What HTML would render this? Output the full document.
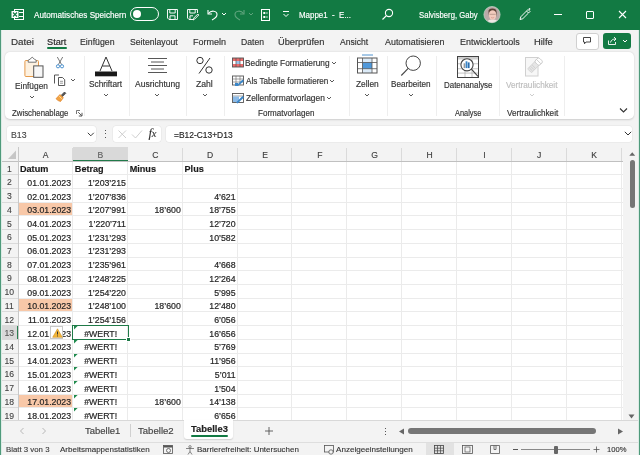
<!DOCTYPE html>
<html><head><meta charset="utf-8"><style>
html,body{margin:0;padding:0;}
body{width:640px;height:455px;overflow:hidden;position:relative;font-family:"Liberation Sans", sans-serif;background:#f3f3f3;}
.t{position:absolute;white-space:nowrap;-webkit-text-stroke:0.16px currentColor;}
.r{position:absolute;box-sizing:content-box;}
.s{position:absolute;overflow:visible;}
</style></head><body>
<div style="position:absolute;left:0;top:0;width:640px;height:455px;filter:blur(0.3px)">
<div class="r" style="left:0px;top:0px;width:640px;height:30px;background:#127a43;"></div>
<svg class="s" style="left:11px;top:8px;" width="13" height="13" viewBox="0 0 13 13"><rect x="3.5" y="1.5" width="9" height="10" fill="none" stroke="#fff" stroke-width="1"/><line x1="8" y1="4.5" x2="12.5" y2="4.5" stroke="#fff"/><line x1="8" y1="8.5" x2="12.5" y2="8.5" stroke="#fff"/><rect x="0.5" y="3" width="7" height="7" fill="#fff"/><path d="M2 4.5 L6 8.5 M6 4.5 L2 8.5" stroke="#127a43" stroke-width="1.1"/></svg>
<div class="t" style="top:10.72px;font-size:8.6px;line-height:8.6px;color:#fff;font-weight:400;left:33.6px;transform:scaleX(0.947);transform-origin:0 0;">Automatisches Speichern</div>
<div class="r" style="left:130px;top:7px;width:27px;height:12px;border:1px solid #fff;border-radius:7px;"></div>
<div class="r" style="left:133px;top:10px;width:8px;height:8px;background:#fff;border-radius:50%;"></div>
<svg class="s" style="left:166px;top:8px;" width="13" height="13" viewBox="0 0 13 13"><path d="M1.5 1.5 H11.5 V11.5 H3 L1.5 10 Z" fill="none" stroke="#fff" stroke-width="0.95"/><path d="M3.8 1.5 V5 H9.2 V1.5" fill="none" stroke="#fff" stroke-width="0.95"/><path d="M4 11.5 V7.8 H9 V11.5" fill="none" stroke="#fff" stroke-width="0.95"/></svg>
<svg class="s" style="left:186px;top:8px;" width="13" height="13" viewBox="0 0 13 13"><path d="M7 11.5 H3 L1.5 10 V1.5 H11.5 V5" fill="none" stroke="#fff" stroke-width="0.95"/><path d="M3.8 1.5 V5 H9.2 V1.5" fill="none" stroke="#fff" stroke-width="0.95"/><path d="M4 11.5 V7.8 H7" fill="none" stroke="#fff" stroke-width="0.95"/><path d="M7.3 12 L7.8 10 L11.8 6 L12.8 7 L8.8 11 Z" fill="none" stroke="#fff" stroke-width="0.9"/></svg>
<svg class="s" style="left:206px;top:8px;" width="13" height="13" viewBox="0 0 13 13"><path d="M2 2 V6 H6" fill="none" stroke="#fff" stroke-width="1.1"/><path d="M2.5 5.5 C5 2 11 2.5 11 6.5 C11 9 9 10.5 6 12" fill="none" stroke="#fff" stroke-width="1.1"/></svg>
<svg class="s" style="left:221px;top:12px;" width="6" height="4" viewBox="0 0 6 4"><path d="M1 1 L3 3 L5 1" fill="none" stroke="#fff"/></svg>
<svg class="s" style="left:233px;top:8px;" width="13" height="13" viewBox="0 0 13 13"><path d="M11 2 V6 H7" fill="none" stroke="#5fa47d" stroke-width="1.1"/><path d="M10.5 5.5 C8 2 2 2.5 2 6.5 C2 9 4 10.5 7 12" fill="none" stroke="#5fa47d" stroke-width="1.1"/></svg>
<svg class="s" style="left:248px;top:12px;" width="6" height="4" viewBox="0 0 6 4"><path d="M1 1 L3 3 L5 1" fill="none" stroke="#5fa47d"/></svg>
<svg class="s" style="left:260px;top:8px;" width="11" height="13" viewBox="0 0 11 13"><rect x="1.5" y="1.5" width="8" height="11" fill="none" stroke="#fff" stroke-width="1"/><rect x="3.3" y="4" width="2" height="2" fill="#fff"/><rect x="3.3" y="8" width="2" height="2" fill="#fff"/><line x1="6" y1="5" x2="7.8" y2="5" stroke="#fff" stroke-width="0.8"/><line x1="6" y1="9" x2="7.8" y2="9" stroke="#fff" stroke-width="0.8"/></svg>
<svg class="s" style="left:282px;top:10px;" width="8" height="9" viewBox="0 0 8 9"><line x1="1" y1="1.5" x2="7" y2="1.5" stroke="#fff"/><path d="M1.5 4 L4 6.5 L6.5 4" fill="none" stroke="#fff"/></svg>
<div class="t" style="top:10.52px;font-size:8.6px;line-height:8.6px;color:#fff;font-weight:400;left:299.17px;transform:scaleX(0.923);transform-origin:0 0;">Mappe1&nbsp; - &nbsp;E...</div>
<svg class="s" style="left:381px;top:8px;" width="13" height="13" viewBox="0 0 13 13"><circle cx="8" cy="5" r="3.6" fill="none" stroke="#fff" stroke-width="1.1"/><line x1="5.4" y1="7.6" x2="1.5" y2="11.5" stroke="#fff" stroke-width="1.2"/></svg>
<div class="t" style="top:10.72px;font-size:8.6px;line-height:8.6px;color:#fff;font-weight:400;left:419.4px;transform:scaleX(0.895);transform-origin:0 0;">Salvisberg, Gaby</div>
<svg class="s" style="left:483px;top:6px;" width="18" height="18" viewBox="0 0 18 18"><defs><clipPath id="av"><circle cx="9" cy="8.6" r="8.1"/></clipPath></defs><g clip-path="url(#av)"><rect width="18" height="18" fill="#b9aaa8"/><path d="M3.5 18 Q4 13 9.5 13.5 Q15 13 15.5 18 Z" fill="#eee8e4"/><path d="M5.5 6 Q5 2.3 9.5 2.4 Q13.8 2.5 13.6 6.5 L13.4 11 L12.5 6 Q9.5 4 6.5 6 L6 10 Z" fill="#5b4236"/><ellipse cx="9.6" cy="9" rx="3.7" ry="4.8" fill="#f2cbbd"/><path d="M6.5 8.3 H12.7" stroke="#9a7e74" stroke-width="0.6"/><path d="M8 11.5 Q9.6 12.4 11.2 11.5" fill="none" stroke="#d08a80" stroke-width="0.6"/></g><circle cx="9" cy="8.6" r="8.1" fill="none" stroke="#c8d8cc" stroke-width="0.7"/></svg>
<svg class="s" style="left:518px;top:7px;" width="14" height="14" viewBox="0 0 14 14"><path d="M2 12.5 L2.8 9.8 L8.5 4 L10.5 6 L4.8 11.7 Z" fill="none" stroke="#fff" stroke-width="0.95"/><path d="M8.5 4 L10 2.5 L12 4.5 L10.5 6" fill="none" stroke="#fff" stroke-width="0.95"/><path d="M11.5 1 V3 M10.5 2 H12.5" stroke="#fff" stroke-width="0.7"/></svg>
<div class="r" style="left:554px;top:13.5px;width:8px;height:1.2px;background:#fff;"></div>
<div class="r" style="left:586px;top:11px;width:6px;height:6px;border:1.2px solid #fff;border-radius:1px;"></div>
<svg class="s" style="left:618px;top:10px;" width="9" height="9" viewBox="0 0 9 9"><path d="M1 1 L8 8 M8 1 L1 8" stroke="#fff" stroke-width="1.1"/></svg>
<div class="r" style="left:0px;top:30px;width:640px;height:425px;background:#f3f3f3;"></div>
<div class="t" style="top:37.57px;font-size:8.9px;line-height:8.9px;color:#333;font-weight:400;left:10.71px;transform:scaleX(1.106);transform-origin:0 0;">Datei</div>
<div class="t" style="top:37.57px;font-size:8.9px;line-height:8.9px;color:#1f1f1f;font-weight:400;left:46.58px;transform:scaleX(1.036);transform-origin:0 0;">Start</div>
<div class="t" style="top:37.57px;font-size:8.9px;line-height:8.9px;color:#333;font-weight:400;left:79.9px;transform:scaleX(0.986);transform-origin:0 0;">Einfügen</div>
<div class="t" style="top:37.57px;font-size:8.9px;line-height:8.9px;color:#333;font-weight:400;left:130.21px;transform:scaleX(0.977);transform-origin:0 0;">Seitenlayout</div>
<div class="t" style="top:37.57px;font-size:8.9px;line-height:8.9px;color:#333;font-weight:400;left:193.03px;transform:scaleX(1.015);transform-origin:0 0;">Formeln</div>
<div class="t" style="top:37.57px;font-size:8.9px;line-height:8.9px;color:#333;font-weight:400;left:241.21px;transform:scaleX(0.972);transform-origin:0 0;">Daten</div>
<div class="t" style="top:37.57px;font-size:8.9px;line-height:8.9px;color:#333;font-weight:400;left:278.05px;transform:scaleX(1.045);transform-origin:0 0;">Überprüfen</div>
<div class="t" style="top:37.57px;font-size:8.9px;line-height:8.9px;color:#333;font-weight:400;left:339.7px;transform:scaleX(0.966);transform-origin:0 0;">Ansicht</div>
<div class="t" style="top:37.57px;font-size:8.9px;line-height:8.9px;color:#333;font-weight:400;left:384.75px;transform:scaleX(1.003);transform-origin:0 0;">Automatisieren</div>
<div class="t" style="top:37.57px;font-size:8.9px;line-height:8.9px;color:#333;font-weight:400;left:459.58px;transform:scaleX(1.011);transform-origin:0 0;">Entwicklertools</div>
<div class="t" style="top:37.57px;font-size:8.9px;line-height:8.9px;color:#333;font-weight:400;left:533.75px;transform:scaleX(1.058);transform-origin:0 0;">Hilfe</div>
<div class="r" style="left:47px;top:47px;width:19.5px;height:1.8px;background:#127a43;border-radius:1px;"></div>
<div class="r" style="left:576px;top:33px;width:20.5px;height:15px;background:#fff;border:1px solid #d0d0d0;border-radius:3px;"></div>
<svg class="s" style="left:582px;top:36px;" width="10" height="9" viewBox="0 0 10 9"><path d="M1.5 1.5 H8.5 V6 H4 L2.5 7.8 V6 H1.5 Z" fill="none" stroke="#333" stroke-width="0.9"/></svg>
<div class="r" style="left:603px;top:33px;width:28px;height:16px;background:#127a43;border-radius:3px;"></div>
<svg class="s" style="left:607px;top:36px;" width="11" height="10" viewBox="0 0 11 10"><path d="M1.5 4.5 V8.5 H8.5 V6" fill="none" stroke="#fff" stroke-width="0.9"/><path d="M3.5 6.5 C4 4 6 3 8.5 3 M7 1 L9 3 L7 5" fill="none" stroke="#fff" stroke-width="0.9"/></svg>
<svg class="s" style="left:622px;top:39px;" width="6" height="4" viewBox="0 0 6 4"><path d="M1 1 L3 3 L5 1" fill="none" stroke="#fff"/></svg>
<div class="r" style="left:5px;top:52px;width:629px;height:67px;background:#fff;border-radius:5px;box-shadow:0 0.5px 2px rgba(0,0,0,0.16);"></div>
<div class="r" style="left:84px;top:56px;width:1px;height:60px;background:#eeeeee;"></div>
<div class="r" style="left:129px;top:56px;width:1px;height:60px;background:#eeeeee;"></div>
<div class="r" style="left:185.5px;top:56px;width:1px;height:60px;background:#eeeeee;"></div>
<div class="r" style="left:224px;top:56px;width:1px;height:60px;background:#eeeeee;"></div>
<div class="r" style="left:348.5px;top:56px;width:1px;height:60px;background:#eeeeee;"></div>
<div class="r" style="left:386.5px;top:56px;width:1px;height:60px;background:#eeeeee;"></div>
<div class="r" style="left:436px;top:56px;width:1px;height:60px;background:#eeeeee;"></div>
<div class="r" style="left:499px;top:56px;width:1px;height:60px;background:#eeeeee;"></div>
<div class="r" style="left:564px;top:56px;width:1px;height:60px;background:#eeeeee;"></div>
<svg class="s" style="left:23px;top:56px;" width="22" height="23" viewBox="0 0 22 23"><rect x="1.9" y="4.5" width="13.6" height="16" rx="1" fill="#fdf1e0" stroke="#e59a4a" stroke-width="1"/><path d="M5.2 6.2 V4.2 L7 3.2 L9.2 1.2 L11.4 3.2 L13.2 4.2 V6.2 Z" fill="#fff" stroke="#666" stroke-width="0.9" stroke-linejoin="round"/><rect x="10.7" y="9.9" width="9.3" height="11.4" fill="#f7f7f7" stroke="#555" stroke-width="1"/></svg>
<div class="t" style="top:81.69px;font-size:8.4px;line-height:8.4px;color:#333;font-weight:400;left:15.13px;transform:scaleX(0.995);transform-origin:0 0;">Einfügen</div>
<svg class="s" style="left:29px;top:94.5px;" width="6" height="4" viewBox="0 0 6 4"><path d="M1 1 L3 3 L5 1" fill="none" stroke="#444" stroke-width="0.9"/></svg>
<svg class="s" style="left:55px;top:56px;" width="10" height="13" viewBox="0 0 10 13"><path d="M2.3 1 L6.6 8.6 M7.7 1 L3.4 8.6" stroke="#555" stroke-width="0.8"/><circle cx="3" cy="10.3" r="1.6" fill="none" stroke="#3a86c8" stroke-width="0.9"/><circle cx="7" cy="10.3" r="1.6" fill="none" stroke="#3a86c8" stroke-width="0.9"/></svg>
<svg class="s" style="left:53px;top:73px;" width="13" height="14" viewBox="0 0 13 14"><path d="M1.5 10.5 V2 H6" fill="none" stroke="#444" stroke-width="0.9"/><path d="M5.5 4.5 H9.5 L11.7 6.7 V12.5 H5.5 Z" fill="#fff" stroke="#444" stroke-width="0.9"/><line x1="7" y1="8.3" x2="10" y2="8.3" stroke="#555" stroke-width="0.6"/><line x1="7" y1="10.2" x2="10" y2="10.2" stroke="#555" stroke-width="0.6"/></svg>
<svg class="s" style="left:69.5px;top:78px;" width="6" height="4" viewBox="0 0 6 4"><path d="M1 1 L3 3 L5 1" fill="none" stroke="#444" stroke-width="0.9"/></svg>
<svg class="s" style="left:54px;top:90px;" width="13" height="13" viewBox="0 0 13 13"><path d="M7 5.5 L10.5 2 L11.8 3.3 L8.3 6.8" fill="#555" stroke="#444" stroke-width="0.8"/><path d="M6 4.5 L9.3 7.8 L6.5 11.5 Q4 11 2 8.7 Z" fill="#f2a444" stroke="#dd7d22" stroke-width="0.7"/><path d="M5.2 6.2 L7.8 8.8" stroke="#fde2a8" stroke-width="0.9"/></svg>
<div class="t" style="top:109.56px;font-size:8.2px;line-height:8.2px;color:#333;font-weight:400;left:12.27px;transform:scaleX(0.954);transform-origin:0 0;">Zwischenablage</div>
<svg class="s" style="left:76px;top:110px;" width="7" height="7" viewBox="0 0 7 7"><path d="M0.5 4 V0.5 H4" fill="none" stroke="#555" stroke-width="0.8"/><path d="M2.2 2.2 L5.6 5.6 M6 2.8 V6 H2.8" fill="none" stroke="#444" stroke-width="0.9"/></svg>
<svg class="s" style="left:94px;top:55px;" width="24" height="22" viewBox="0 0 24 22"><path d="M6 16 L12 2 L18 16 M8.3 11 H15.7" fill="none" stroke="#333" stroke-width="1"/><rect x="1" y="16.5" width="22" height="4.8" fill="#1a1a1a"/></svg>
<div class="t" style="top:79.89px;font-size:8.4px;line-height:8.4px;color:#333;font-weight:400;left:89.33px;transform:scaleX(0.986);transform-origin:0 0;">Schriftart</div>
<svg class="s" style="left:103px;top:93px;" width="6" height="4" viewBox="0 0 6 4"><path d="M1 1 L3 3 L5 1" fill="none" stroke="#444" stroke-width="0.9"/></svg>
<svg class="s" style="left:146px;top:55px;" width="24" height="20" viewBox="0 0 24 20"><line x1="2" y1="3.5" x2="21" y2="3.5" stroke="#444" stroke-width="0.9"/><line x1="5" y1="7" x2="18" y2="7" stroke="#444" stroke-width="0.9"/><line x1="2" y1="10.5" x2="21" y2="10.5" stroke="#444" stroke-width="0.9"/><line x1="5" y1="14" x2="18" y2="14" stroke="#444" stroke-width="0.9"/><line x1="2" y1="17.5" x2="21" y2="17.5" stroke="#444" stroke-width="0.9"/></svg>
<div class="t" style="top:79.89px;font-size:8.4px;line-height:8.4px;color:#333;font-weight:400;left:134.7px;transform:scaleX(1.019);transform-origin:0 0;">Ausrichtung</div>
<svg class="s" style="left:154px;top:93px;" width="6" height="4" viewBox="0 0 6 4"><path d="M1 1 L3 3 L5 1" fill="none" stroke="#444" stroke-width="0.9"/></svg>
<svg class="s" style="left:195px;top:56px;" width="20" height="19" viewBox="0 0 20 19"><circle cx="5" cy="4.5" r="3.2" fill="none" stroke="#333" stroke-width="1"/><circle cx="14" cy="14" r="3.2" fill="none" stroke="#333" stroke-width="1"/><line x1="15" y1="2" x2="4" y2="17.5" stroke="#333" stroke-width="1"/></svg>
<div class="t" style="top:79.89px;font-size:8.4px;line-height:8.4px;color:#333;font-weight:400;left:196.04px;transform:scaleX(1.030);transform-origin:0 0;">Zahl</div>
<svg class="s" style="left:201.5px;top:93px;" width="6" height="4" viewBox="0 0 6 4"><path d="M1 1 L3 3 L5 1" fill="none" stroke="#444" stroke-width="0.9"/></svg>
<svg class="s" style="left:231px;top:57px;" width="14" height="11" viewBox="0 0 14 11"><rect x="1.5" y="1" width="11" height="9" fill="#fff"/><rect x="1.5" y="1" width="11" height="3" fill="#ec6b6b"/><rect x="1.5" y="7" width="11" height="3" fill="#ec6b6b"/><rect x="5" y="4" width="4" height="3" fill="#9cc3ea"/><rect x="1.5" y="1" width="11" height="9" fill="none" stroke="#555" stroke-width="0.9"/><line x1="5" y1="1" x2="5" y2="10" stroke="#555" stroke-width="0.7"/><line x1="9" y1="1" x2="9" y2="10" stroke="#555" stroke-width="0.7"/></svg>
<div class="t" style="top:60.06px;font-size:8.2px;line-height:8.2px;color:#333;font-weight:400;left:245.33px;transform:scaleX(1.015);transform-origin:0 0;">Bedingte Formatierung</div>
<svg class="s" style="left:331px;top:61px;" width="6" height="4" viewBox="0 0 6 4"><path d="M1 1 L3 3 L5 1" fill="none" stroke="#444" stroke-width="0.9"/></svg>
<svg class="s" style="left:231px;top:75px;" width="14" height="11" viewBox="0 0 14 11"><rect x="1.5" y="1" width="11" height="9" fill="none" stroke="#555" stroke-width="0.9"/><line x1="1.5" y1="4" x2="12.5" y2="4" stroke="#666" stroke-width="0.6"/><line x1="1.5" y1="7" x2="12.5" y2="7" stroke="#666" stroke-width="0.6"/><line x1="5" y1="1" x2="5" y2="10" stroke="#666" stroke-width="0.6"/><line x1="9" y1="1" x2="9" y2="10" stroke="#666" stroke-width="0.6"/><path d="M5.5 10.5 L11.5 4.5 L13 6 L7 11 Z" fill="#3a86c8"/><rect x="4" y="8" width="3" height="3" fill="#3a86c8"/></svg>
<div class="t" style="top:77.66px;font-size:8.2px;line-height:8.2px;color:#333;font-weight:400;left:246.0px;transform:scaleX(0.991);transform-origin:0 0;">Als Tabelle formatieren</div>
<svg class="s" style="left:329px;top:79px;" width="6" height="4" viewBox="0 0 6 4"><path d="M1 1 L3 3 L5 1" fill="none" stroke="#444" stroke-width="0.9"/></svg>
<svg class="s" style="left:231px;top:92px;" width="14" height="12" viewBox="0 0 14 12"><rect x="1.5" y="1.5" width="11" height="9" fill="none" stroke="#555" stroke-width="0.9"/><line x1="1.5" y1="4" x2="12.5" y2="4" stroke="#666" stroke-width="0.6"/><rect x="2" y="4.5" width="6" height="5.5" fill="#8cbbe8"/><path d="M5 10.5 L11.5 4 L13 5.5 L6.5 11.5 Z" fill="#3a86c8"/></svg>
<div class="t" style="top:94.86px;font-size:8.2px;line-height:8.2px;color:#333;font-weight:400;left:245.75px;transform:scaleX(1.025);transform-origin:0 0;">Zellenformatvorlagen</div>
<svg class="s" style="left:325.5px;top:96px;" width="6" height="4" viewBox="0 0 6 4"><path d="M1 1 L3 3 L5 1" fill="none" stroke="#444" stroke-width="0.9"/></svg>
<div class="t" style="top:109.56px;font-size:8.2px;line-height:8.2px;color:#333;font-weight:400;left:257.96px;transform:scaleX(0.983);transform-origin:0 0;">Formatvorlagen</div>
<svg class="s" style="left:356px;top:53px;" width="22" height="21" viewBox="0 0 22 21"><line x1="6" y1="2" x2="17" y2="2" stroke="#3a86c8" stroke-width="0.9"/><rect x="6.5" y="5" width="9.5" height="15" fill="#dcebf8"/><rect x="6.5" y="9.5" width="9.5" height="6.2" fill="#4f98da"/><rect x="1.5" y="5" width="19.5" height="15" fill="none" stroke="#555" stroke-width="1"/><line x1="1.5" y1="9.5" x2="21" y2="9.5" stroke="#555" stroke-width="0.8"/><line x1="1.5" y1="15.7" x2="21" y2="15.7" stroke="#555" stroke-width="0.8"/><line x1="6.5" y1="5" x2="6.5" y2="20" stroke="#555" stroke-width="0.8"/><line x1="16" y1="5" x2="16" y2="20" stroke="#555" stroke-width="0.8"/></svg>
<div class="t" style="top:79.89px;font-size:8.4px;line-height:8.4px;color:#333;font-weight:400;left:355.65px;transform:scaleX(0.998);transform-origin:0 0;">Zellen</div>
<svg class="s" style="left:364px;top:93px;" width="6" height="4" viewBox="0 0 6 4"><path d="M1 1 L3 3 L5 1" fill="none" stroke="#444" stroke-width="0.9"/></svg>
<svg class="s" style="left:399px;top:54px;" width="24" height="23" viewBox="0 0 24 23"><circle cx="14.2" cy="9.2" r="7.2" fill="none" stroke="#444" stroke-width="1"/><line x1="9.2" y1="14.4" x2="2.3" y2="21.5" stroke="#444" stroke-width="1.1"/></svg>
<div class="t" style="top:79.89px;font-size:8.4px;line-height:8.4px;color:#333;font-weight:400;left:391.04px;transform:scaleX(0.976);transform-origin:0 0;">Bearbeiten</div>
<svg class="s" style="left:407.5px;top:93px;" width="6" height="4" viewBox="0 0 6 4"><path d="M1 1 L3 3 L5 1" fill="none" stroke="#444" stroke-width="0.9"/></svg>
<svg class="s" style="left:456px;top:55px;" width="24" height="24" viewBox="0 0 24 24"><rect x="1.5" y="1.5" width="21" height="21" fill="#fff" stroke="#444" stroke-width="1"/><rect x="2" y="2" width="20" height="2.5" fill="#cfcfcf"/><line x1="2" y1="8.75" x2="22" y2="8.75" stroke="#aaa" stroke-width="0.7"/><line x1="2" y1="13.75" x2="22" y2="13.75" stroke="#aaa" stroke-width="0.7"/><line x1="2" y1="18.1" x2="22" y2="18.1" stroke="#aaa" stroke-width="0.7"/><line x1="9" y1="4.5" x2="9" y2="22" stroke="#aaa" stroke-width="0.7"/><line x1="16" y1="4.5" x2="16" y2="22" stroke="#aaa" stroke-width="0.7"/><circle cx="11" cy="9.8" r="6.1" fill="#fff" stroke="#444" stroke-width="1.1"/><line x1="15.4" y1="14.2" x2="22" y2="21.3" stroke="#444" stroke-width="1.1"/><rect x="7.6" y="8.3" width="1.6" height="4.8" fill="#9a9a9a"/><rect x="9.6" y="6.3" width="1.8" height="6.8" fill="#3a86c8"/><rect x="11.8" y="7.4" width="1.8" height="5.7" fill="#2a6fb0"/></svg>
<div class="t" style="top:81.29px;font-size:8.4px;line-height:8.4px;color:#333;font-weight:400;left:443.66px;transform:scaleX(0.947);transform-origin:0 0;">Datenanalyse</div>
<div class="t" style="top:109.56px;font-size:8.2px;line-height:8.2px;color:#333;font-weight:400;left:455.0px;transform:scaleX(0.902);transform-origin:0 0;">Analyse</div>
<svg class="s" style="left:523px;top:55px;" width="22" height="23" viewBox="0 0 22 23"><rect x="2.5" y="2.5" width="12.5" height="18.5" fill="#f7f7f7" stroke="#d0d0d0" stroke-width="1"/><g transform="rotate(-45 12 10)"><rect x="4" y="7.5" width="15" height="5.5" rx="1" fill="#e6e6e6" stroke="#cfcfcf" stroke-width="0.8"/><line x1="6" y1="8" x2="6" y2="12.5" stroke="#c8c8c8" stroke-width="0.7"/><line x1="8" y1="8" x2="8" y2="12.5" stroke="#c8c8c8" stroke-width="0.7"/><line x1="10" y1="8" x2="10" y2="12.5" stroke="#c8c8c8" stroke-width="0.7"/><rect x="14" y="7" width="6" height="6.5" rx="2" fill="#fff" stroke="#c8c8c8" stroke-width="0.9"/><line x1="17" y1="7" x2="17" y2="13.5" stroke="#c8c8c8" stroke-width="0.8"/></g></svg>
<div class="t" style="top:81.29px;font-size:8.4px;line-height:8.4px;color:#bdbdbd;font-weight:400;left:505.86px;transform:scaleX(0.978);transform-origin:0 0;">Vertraulichkeit</div>
<svg class="s" style="left:528.5px;top:93px;" width="6" height="4" viewBox="0 0 6 4"><path d="M1 1 L3 3 L5 1" fill="none" stroke="#c8c8c8" stroke-width="0.9"/></svg>
<div class="t" style="top:109.56px;font-size:8.2px;line-height:8.2px;color:#333;font-weight:400;left:506.76px;transform:scaleX(0.996);transform-origin:0 0;">Vertraulichkeit</div>
<svg class="s" style="left:619px;top:107px;" width="9" height="7" viewBox="0 0 9 7"><path d="M1 1.5 L4.5 5 L8 1.5" fill="none" stroke="#333" stroke-width="1.1"/></svg>
<div class="r" style="left:7px;top:126px;width:89px;height:15.5px;background:#fff;border-radius:3px;box-shadow:0 0 0 0.5px #e3e3e3;"></div>
<div class="t" style="top:130.52px;font-size:8.6px;line-height:8.6px;color:#444;font-weight:400;left:10.55px;-webkit-text-stroke:0.12px currentColor;transform:scaleX(1.019);transform-origin:0 0;">B13</div>
<svg class="s" style="left:86.5px;top:132.3px;" width="8" height="5" viewBox="0 0 8 5"><path d="M0.8 0.8 L3.8 3.8 L6.8 0.8" fill="none" stroke="#333" stroke-width="0.95"/></svg>
<div class="r" style="left:104.5px;top:129.5px;width:1.3px;height:1.3px;background:#555;"></div>
<div class="r" style="left:104.5px;top:133px;width:1.3px;height:1.3px;background:#555;"></div>
<div class="r" style="left:104.5px;top:136.5px;width:1.3px;height:1.3px;background:#555;"></div>
<div class="r" style="left:113px;top:126px;width:48px;height:15.5px;background:#fff;border-radius:3px;box-shadow:0 0 0 0.5px #e3e3e3;"></div>
<svg class="s" style="left:117px;top:129px;" width="11" height="10" viewBox="0 0 11 10"><path d="M1.5 1.5 L9 9 M9 1.5 L1.5 9" stroke="#c8c8c8" stroke-width="0.9"/></svg>
<svg class="s" style="left:131px;top:129px;" width="12" height="10" viewBox="0 0 12 10"><path d="M1 5.5 L4.5 9 L11 1.5" fill="none" stroke="#c8c8c8" stroke-width="0.9"/></svg>
<div class="t" style="left:148.5px;top:125.5px;font-family:'Liberation Serif',serif;font-style:italic;font-size:13px;line-height:14px;color:#333;-webkit-text-stroke:0.1px #333">f<span style="font-size:10.5px;position:relative;left:-0.3px;top:0.3px">x</span></div>
<div class="r" style="left:166px;top:126px;width:466px;height:15.5px;background:#fff;border-radius:3px;box-shadow:0 0 0 0.5px #e3e3e3;"></div>
<div class="t" style="top:130.62px;font-size:8.6px;line-height:8.6px;color:#262626;font-weight:400;left:173.58px;transform:scaleX(0.981);transform-origin:0 0;">=B12-C13+D13</div>
<svg class="s" style="left:623.5px;top:130.5px;" width="8" height="5" viewBox="0 0 8 5"><path d="M0.8 0.8 L4 4 L7.2 0.8" fill="none" stroke="#333" stroke-width="1"/></svg>
<div style="position:absolute;left:0;top:0;width:640px;height:420px;overflow:hidden">
<div class="r" style="left:0px;top:147px;width:623px;height:14px;background:#f3f3f3;"></div>
<div class="r" style="left:18px;top:161px;width:605px;height:259px;background:#fff;"></div>
<div class="r" style="left:0px;top:161px;width:18px;height:259px;background:#f3f3f3;"></div>
<svg class="s" style="left:7px;top:149px;" width="10" height="11" viewBox="0 0 10 11"><path d="M9 1.5 L9 10 L1 10 Z" fill="#c6c6c6"/></svg>
<div class="r" style="left:73px;top:147px;width:54.5px;height:14px;background:#d9d9d9;"></div>
<div class="r" style="left:2px;top:326px;width:16px;height:13px;background:#d9d9d9;"></div>
<div class="r" style="left:18px;top:203px;width:54px;height:12px;background:#f8c8a8;"></div>
<div class="r" style="left:18px;top:299px;width:54px;height:12px;background:#f8c8a8;"></div>
<div class="r" style="left:18px;top:395px;width:54px;height:12px;background:#f8c8a8;"></div>
<div class="r" style="left:18px;top:174px;width:605px;height:1px;background:#ebebeb;"></div>
<div class="r" style="left:18px;top:188px;width:605px;height:1px;background:#ebebeb;"></div>
<div class="r" style="left:18px;top:202px;width:605px;height:1px;background:#ebebeb;"></div>
<div class="r" style="left:18px;top:215px;width:605px;height:1px;background:#ebebeb;"></div>
<div class="r" style="left:18px;top:229px;width:605px;height:1px;background:#ebebeb;"></div>
<div class="r" style="left:18px;top:243px;width:605px;height:1px;background:#ebebeb;"></div>
<div class="r" style="left:18px;top:257px;width:605px;height:1px;background:#ebebeb;"></div>
<div class="r" style="left:18px;top:270px;width:605px;height:1px;background:#ebebeb;"></div>
<div class="r" style="left:18px;top:284px;width:605px;height:1px;background:#ebebeb;"></div>
<div class="r" style="left:18px;top:298px;width:605px;height:1px;background:#ebebeb;"></div>
<div class="r" style="left:18px;top:311px;width:605px;height:1px;background:#ebebeb;"></div>
<div class="r" style="left:18px;top:325px;width:605px;height:1px;background:#ebebeb;"></div>
<div class="r" style="left:18px;top:339px;width:605px;height:1px;background:#ebebeb;"></div>
<div class="r" style="left:18px;top:353px;width:605px;height:1px;background:#ebebeb;"></div>
<div class="r" style="left:18px;top:366px;width:605px;height:1px;background:#ebebeb;"></div>
<div class="r" style="left:18px;top:380px;width:605px;height:1px;background:#ebebeb;"></div>
<div class="r" style="left:18px;top:394px;width:605px;height:1px;background:#ebebeb;"></div>
<div class="r" style="left:18px;top:407px;width:605px;height:1px;background:#ebebeb;"></div>
<div class="r" style="left:18px;top:421px;width:605px;height:1px;background:#ebebeb;"></div>
<div class="r" style="left:18px;top:435px;width:605px;height:1px;background:#ebebeb;"></div>
<div class="r" style="left:72px;top:161px;width:1px;height:259px;background:#ebebeb;"></div>
<div class="r" style="left:127px;top:161px;width:1px;height:259px;background:#ebebeb;"></div>
<div class="r" style="left:182px;top:161px;width:1px;height:259px;background:#ebebeb;"></div>
<div class="r" style="left:237px;top:161px;width:1px;height:259px;background:#ebebeb;"></div>
<div class="r" style="left:291px;top:161px;width:1px;height:259px;background:#ebebeb;"></div>
<div class="r" style="left:346px;top:161px;width:1px;height:259px;background:#ebebeb;"></div>
<div class="r" style="left:401px;top:161px;width:1px;height:259px;background:#ebebeb;"></div>
<div class="r" style="left:456px;top:161px;width:1px;height:259px;background:#ebebeb;"></div>
<div class="r" style="left:511px;top:161px;width:1px;height:259px;background:#ebebeb;"></div>
<div class="r" style="left:566px;top:161px;width:1px;height:259px;background:#ebebeb;"></div>
<div class="r" style="left:621px;top:161px;width:1px;height:259px;background:#ebebeb;"></div>
<div class="r" style="left:72px;top:148px;width:1px;height:13px;background:#dadada;"></div>
<div class="r" style="left:127px;top:148px;width:1px;height:13px;background:#dadada;"></div>
<div class="r" style="left:182px;top:148px;width:1px;height:13px;background:#dadada;"></div>
<div class="r" style="left:237px;top:148px;width:1px;height:13px;background:#dadada;"></div>
<div class="r" style="left:291px;top:148px;width:1px;height:13px;background:#dadada;"></div>
<div class="r" style="left:346px;top:148px;width:1px;height:13px;background:#dadada;"></div>
<div class="r" style="left:401px;top:148px;width:1px;height:13px;background:#dadada;"></div>
<div class="r" style="left:456px;top:148px;width:1px;height:13px;background:#dadada;"></div>
<div class="r" style="left:511px;top:148px;width:1px;height:13px;background:#dadada;"></div>
<div class="r" style="left:566px;top:148px;width:1px;height:13px;background:#dadada;"></div>
<div class="r" style="left:621px;top:148px;width:1px;height:13px;background:#dadada;"></div>
<div class="r" style="left:0px;top:174px;width:18px;height:1px;background:#dadada;"></div>
<div class="r" style="left:0px;top:188px;width:18px;height:1px;background:#dadada;"></div>
<div class="r" style="left:0px;top:202px;width:18px;height:1px;background:#dadada;"></div>
<div class="r" style="left:0px;top:215px;width:18px;height:1px;background:#dadada;"></div>
<div class="r" style="left:0px;top:229px;width:18px;height:1px;background:#dadada;"></div>
<div class="r" style="left:0px;top:243px;width:18px;height:1px;background:#dadada;"></div>
<div class="r" style="left:0px;top:257px;width:18px;height:1px;background:#dadada;"></div>
<div class="r" style="left:0px;top:270px;width:18px;height:1px;background:#dadada;"></div>
<div class="r" style="left:0px;top:284px;width:18px;height:1px;background:#dadada;"></div>
<div class="r" style="left:0px;top:298px;width:18px;height:1px;background:#dadada;"></div>
<div class="r" style="left:0px;top:311px;width:18px;height:1px;background:#dadada;"></div>
<div class="r" style="left:0px;top:325px;width:18px;height:1px;background:#dadada;"></div>
<div class="r" style="left:0px;top:339px;width:18px;height:1px;background:#dadada;"></div>
<div class="r" style="left:0px;top:353px;width:18px;height:1px;background:#dadada;"></div>
<div class="r" style="left:0px;top:366px;width:18px;height:1px;background:#dadada;"></div>
<div class="r" style="left:0px;top:380px;width:18px;height:1px;background:#dadada;"></div>
<div class="r" style="left:0px;top:394px;width:18px;height:1px;background:#dadada;"></div>
<div class="r" style="left:0px;top:407px;width:18px;height:1px;background:#dadada;"></div>
<div class="r" style="left:0px;top:421px;width:18px;height:1px;background:#dadada;"></div>
<div class="r" style="left:0px;top:435px;width:18px;height:1px;background:#dadada;"></div>
<div class="r" style="left:0px;top:160.5px;width:623px;height:1px;background:#c0c0c0;"></div>
<div class="r" style="left:17.5px;top:147px;width:1px;height:273px;background:#c8c8c8;"></div>
<div class="r" style="left:72.5px;top:159.8px;width:55.3px;height:1.5px;background:#217a4a;"></div>
<div class="r" style="left:17px;top:326px;width:1.3px;height:13px;background:#2a7d50;"></div>
<div class="t" style="top:150.92px;font-size:8.6px;line-height:8.6px;color:#3c3c3c;font-weight:400;left:-104.4px;width:300px;text-align:center;-webkit-text-stroke:0.12px currentColor;">A</div>
<div class="t" style="top:150.92px;font-size:8.6px;line-height:8.6px;color:#606060;font-weight:400;left:-49.55000000000001px;width:300px;text-align:center;-webkit-text-stroke:0.12px currentColor;">B</div>
<div class="t" style="top:150.92px;font-size:8.6px;line-height:8.6px;color:#3c3c3c;font-weight:400;left:5.300000000000011px;width:300px;text-align:center;-webkit-text-stroke:0.12px currentColor;">C</div>
<div class="t" style="top:150.92px;font-size:8.6px;line-height:8.6px;color:#3c3c3c;font-weight:400;left:60.150000000000006px;width:300px;text-align:center;-webkit-text-stroke:0.12px currentColor;">D</div>
<div class="t" style="top:150.92px;font-size:8.6px;line-height:8.6px;color:#3c3c3c;font-weight:400;left:115.0px;width:300px;text-align:center;-webkit-text-stroke:0.12px currentColor;">E</div>
<div class="t" style="top:150.92px;font-size:8.6px;line-height:8.6px;color:#3c3c3c;font-weight:400;left:169.85000000000002px;width:300px;text-align:center;-webkit-text-stroke:0.12px currentColor;">F</div>
<div class="t" style="top:150.92px;font-size:8.6px;line-height:8.6px;color:#3c3c3c;font-weight:400;left:224.70000000000005px;width:300px;text-align:center;-webkit-text-stroke:0.12px currentColor;">G</div>
<div class="t" style="top:150.92px;font-size:8.6px;line-height:8.6px;color:#3c3c3c;font-weight:400;left:279.55px;width:300px;text-align:center;-webkit-text-stroke:0.12px currentColor;">H</div>
<div class="t" style="top:150.92px;font-size:8.6px;line-height:8.6px;color:#3c3c3c;font-weight:400;left:334.40000000000003px;width:300px;text-align:center;-webkit-text-stroke:0.12px currentColor;">I</div>
<div class="t" style="top:150.92px;font-size:8.6px;line-height:8.6px;color:#3c3c3c;font-weight:400;left:389.25px;width:300px;text-align:center;-webkit-text-stroke:0.12px currentColor;">J</div>
<div class="t" style="top:150.92px;font-size:8.6px;line-height:8.6px;color:#3c3c3c;font-weight:400;left:444.1px;width:300px;text-align:center;-webkit-text-stroke:0.12px currentColor;">K</div>
<div class="t" style="top:164.64px;font-size:8.6px;line-height:8.6px;color:#404040;font-weight:400;left:-140.7px;width:300px;text-align:center;-webkit-text-stroke:0.1px currentColor;">1</div>
<div class="t" style="top:178.36px;font-size:8.6px;line-height:8.6px;color:#404040;font-weight:400;left:-140.7px;width:300px;text-align:center;-webkit-text-stroke:0.1px currentColor;">2</div>
<div class="t" style="top:192.08px;font-size:8.6px;line-height:8.6px;color:#404040;font-weight:400;left:-140.7px;width:300px;text-align:center;-webkit-text-stroke:0.1px currentColor;">3</div>
<div class="t" style="top:205.80px;font-size:8.6px;line-height:8.6px;color:#404040;font-weight:400;left:-140.7px;width:300px;text-align:center;-webkit-text-stroke:0.1px currentColor;">4</div>
<div class="t" style="top:219.52px;font-size:8.6px;line-height:8.6px;color:#404040;font-weight:400;left:-140.7px;width:300px;text-align:center;-webkit-text-stroke:0.1px currentColor;">5</div>
<div class="t" style="top:233.24px;font-size:8.6px;line-height:8.6px;color:#404040;font-weight:400;left:-140.7px;width:300px;text-align:center;-webkit-text-stroke:0.1px currentColor;">6</div>
<div class="t" style="top:246.96px;font-size:8.6px;line-height:8.6px;color:#404040;font-weight:400;left:-140.7px;width:300px;text-align:center;-webkit-text-stroke:0.1px currentColor;">7</div>
<div class="t" style="top:260.68px;font-size:8.6px;line-height:8.6px;color:#404040;font-weight:400;left:-140.7px;width:300px;text-align:center;-webkit-text-stroke:0.1px currentColor;">8</div>
<div class="t" style="top:274.40px;font-size:8.6px;line-height:8.6px;color:#404040;font-weight:400;left:-140.7px;width:300px;text-align:center;-webkit-text-stroke:0.1px currentColor;">9</div>
<div class="t" style="top:288.12px;font-size:8.6px;line-height:8.6px;color:#404040;font-weight:400;left:-140.7px;width:300px;text-align:center;-webkit-text-stroke:0.1px currentColor;">10</div>
<div class="t" style="top:301.84px;font-size:8.6px;line-height:8.6px;color:#404040;font-weight:400;left:-140.7px;width:300px;text-align:center;-webkit-text-stroke:0.1px currentColor;">11</div>
<div class="t" style="top:315.56px;font-size:8.6px;line-height:8.6px;color:#404040;font-weight:400;left:-140.7px;width:300px;text-align:center;-webkit-text-stroke:0.1px currentColor;">12</div>
<div class="t" style="top:329.28px;font-size:8.6px;line-height:8.6px;color:#555;font-weight:400;left:-140.7px;width:300px;text-align:center;-webkit-text-stroke:0.1px currentColor;">13</div>
<div class="t" style="top:343.00px;font-size:8.6px;line-height:8.6px;color:#404040;font-weight:400;left:-140.7px;width:300px;text-align:center;-webkit-text-stroke:0.1px currentColor;">14</div>
<div class="t" style="top:356.72px;font-size:8.6px;line-height:8.6px;color:#404040;font-weight:400;left:-140.7px;width:300px;text-align:center;-webkit-text-stroke:0.1px currentColor;">15</div>
<div class="t" style="top:370.44px;font-size:8.6px;line-height:8.6px;color:#404040;font-weight:400;left:-140.7px;width:300px;text-align:center;-webkit-text-stroke:0.1px currentColor;">16</div>
<div class="t" style="top:384.16px;font-size:8.6px;line-height:8.6px;color:#404040;font-weight:400;left:-140.7px;width:300px;text-align:center;-webkit-text-stroke:0.1px currentColor;">17</div>
<div class="t" style="top:397.88px;font-size:8.6px;line-height:8.6px;color:#404040;font-weight:400;left:-140.7px;width:300px;text-align:center;-webkit-text-stroke:0.1px currentColor;">18</div>
<div class="t" style="top:411.60px;font-size:8.6px;line-height:8.6px;color:#404040;font-weight:400;left:-140.7px;width:300px;text-align:center;-webkit-text-stroke:0.1px currentColor;">19</div>
<div class="t" style="top:164.82px;font-size:9.1px;line-height:9.1px;color:#1a1a1a;font-weight:700;left:20.0px;">Datum</div>
<div class="t" style="top:164.82px;font-size:9.1px;line-height:9.1px;color:#1a1a1a;font-weight:700;left:74.85px;">Betrag</div>
<div class="t" style="top:164.82px;font-size:9.1px;line-height:9.1px;color:#1a1a1a;font-weight:700;left:129.7px;">Minus</div>
<div class="t" style="top:164.82px;font-size:9.1px;line-height:9.1px;color:#1a1a1a;font-weight:700;left:184.55px;">Plus</div>
<div class="t" style="top:178.83px;font-size:8.75px;line-height:8.75px;color:#262626;font-weight:400;right:568.95px;-webkit-text-stroke:0.2px currentColor;">01.01.2023</div>
<div class="t" style="top:178.83px;font-size:8.75px;line-height:8.75px;color:#262626;font-weight:400;right:514.1px;-webkit-text-stroke:0.2px currentColor;">1’203’215</div>
<div class="t" style="top:192.55px;font-size:8.75px;line-height:8.75px;color:#262626;font-weight:400;right:568.95px;-webkit-text-stroke:0.2px currentColor;">02.01.2023</div>
<div class="t" style="top:192.55px;font-size:8.75px;line-height:8.75px;color:#262626;font-weight:400;right:514.1px;-webkit-text-stroke:0.2px currentColor;">1’207’836</div>
<div class="t" style="top:192.55px;font-size:8.75px;line-height:8.75px;color:#262626;font-weight:400;right:404.4px;-webkit-text-stroke:0.2px currentColor;">4’621</div>
<div class="t" style="top:206.27px;font-size:8.75px;line-height:8.75px;color:#262626;font-weight:400;right:568.95px;-webkit-text-stroke:0.2px currentColor;">03.01.2023</div>
<div class="t" style="top:206.27px;font-size:8.75px;line-height:8.75px;color:#262626;font-weight:400;right:514.1px;-webkit-text-stroke:0.2px currentColor;">1’207’991</div>
<div class="t" style="top:206.27px;font-size:8.75px;line-height:8.75px;color:#262626;font-weight:400;right:459.25px;-webkit-text-stroke:0.2px currentColor;">18’600</div>
<div class="t" style="top:206.27px;font-size:8.75px;line-height:8.75px;color:#262626;font-weight:400;right:404.4px;-webkit-text-stroke:0.2px currentColor;">18’755</div>
<div class="t" style="top:219.99px;font-size:8.75px;line-height:8.75px;color:#262626;font-weight:400;right:568.95px;-webkit-text-stroke:0.2px currentColor;">04.01.2023</div>
<div class="t" style="top:219.99px;font-size:8.75px;line-height:8.75px;color:#262626;font-weight:400;right:514.1px;-webkit-text-stroke:0.2px currentColor;">1’220’711</div>
<div class="t" style="top:219.99px;font-size:8.75px;line-height:8.75px;color:#262626;font-weight:400;right:404.4px;-webkit-text-stroke:0.2px currentColor;">12’720</div>
<div class="t" style="top:233.71px;font-size:8.75px;line-height:8.75px;color:#262626;font-weight:400;right:568.95px;-webkit-text-stroke:0.2px currentColor;">05.01.2023</div>
<div class="t" style="top:233.71px;font-size:8.75px;line-height:8.75px;color:#262626;font-weight:400;right:514.1px;-webkit-text-stroke:0.2px currentColor;">1’231’293</div>
<div class="t" style="top:233.71px;font-size:8.75px;line-height:8.75px;color:#262626;font-weight:400;right:404.4px;-webkit-text-stroke:0.2px currentColor;">10’582</div>
<div class="t" style="top:247.43px;font-size:8.75px;line-height:8.75px;color:#262626;font-weight:400;right:568.95px;-webkit-text-stroke:0.2px currentColor;">06.01.2023</div>
<div class="t" style="top:247.43px;font-size:8.75px;line-height:8.75px;color:#262626;font-weight:400;right:514.1px;-webkit-text-stroke:0.2px currentColor;">1’231’293</div>
<div class="t" style="top:261.15px;font-size:8.75px;line-height:8.75px;color:#262626;font-weight:400;right:568.95px;-webkit-text-stroke:0.2px currentColor;">07.01.2023</div>
<div class="t" style="top:261.15px;font-size:8.75px;line-height:8.75px;color:#262626;font-weight:400;right:514.1px;-webkit-text-stroke:0.2px currentColor;">1’235’961</div>
<div class="t" style="top:261.15px;font-size:8.75px;line-height:8.75px;color:#262626;font-weight:400;right:404.4px;-webkit-text-stroke:0.2px currentColor;">4’668</div>
<div class="t" style="top:274.87px;font-size:8.75px;line-height:8.75px;color:#262626;font-weight:400;right:568.95px;-webkit-text-stroke:0.2px currentColor;">08.01.2023</div>
<div class="t" style="top:274.87px;font-size:8.75px;line-height:8.75px;color:#262626;font-weight:400;right:514.1px;-webkit-text-stroke:0.2px currentColor;">1’248’225</div>
<div class="t" style="top:274.87px;font-size:8.75px;line-height:8.75px;color:#262626;font-weight:400;right:404.4px;-webkit-text-stroke:0.2px currentColor;">12’264</div>
<div class="t" style="top:288.59px;font-size:8.75px;line-height:8.75px;color:#262626;font-weight:400;right:568.95px;-webkit-text-stroke:0.2px currentColor;">09.01.2023</div>
<div class="t" style="top:288.59px;font-size:8.75px;line-height:8.75px;color:#262626;font-weight:400;right:514.1px;-webkit-text-stroke:0.2px currentColor;">1’254’220</div>
<div class="t" style="top:288.59px;font-size:8.75px;line-height:8.75px;color:#262626;font-weight:400;right:404.4px;-webkit-text-stroke:0.2px currentColor;">5’995</div>
<div class="t" style="top:302.31px;font-size:8.75px;line-height:8.75px;color:#262626;font-weight:400;right:568.95px;-webkit-text-stroke:0.2px currentColor;">10.01.2023</div>
<div class="t" style="top:302.31px;font-size:8.75px;line-height:8.75px;color:#262626;font-weight:400;right:514.1px;-webkit-text-stroke:0.2px currentColor;">1’248’100</div>
<div class="t" style="top:302.31px;font-size:8.75px;line-height:8.75px;color:#262626;font-weight:400;right:459.25px;-webkit-text-stroke:0.2px currentColor;">18’600</div>
<div class="t" style="top:302.31px;font-size:8.75px;line-height:8.75px;color:#262626;font-weight:400;right:404.4px;-webkit-text-stroke:0.2px currentColor;">12’480</div>
<div class="t" style="top:316.03px;font-size:8.75px;line-height:8.75px;color:#262626;font-weight:400;right:568.95px;-webkit-text-stroke:0.2px currentColor;">11.01.2023</div>
<div class="t" style="top:316.03px;font-size:8.75px;line-height:8.75px;color:#262626;font-weight:400;right:514.1px;-webkit-text-stroke:0.2px currentColor;">1’254’156</div>
<div class="t" style="top:316.03px;font-size:8.75px;line-height:8.75px;color:#262626;font-weight:400;right:404.4px;-webkit-text-stroke:0.2px currentColor;">6’056</div>
<div class="t" style="top:329.75px;font-size:8.75px;line-height:8.75px;color:#262626;font-weight:400;right:568.95px;-webkit-text-stroke:0.2px currentColor;">12.01.2023</div>
<div class="t" style="top:329.75px;font-size:8.75px;line-height:8.75px;color:#262626;font-weight:400;left:-49.35000000000001px;width:300px;text-align:center;-webkit-text-stroke:0.2px currentColor;">#WERT!</div>
<div class="t" style="top:329.75px;font-size:8.75px;line-height:8.75px;color:#262626;font-weight:400;right:404.4px;-webkit-text-stroke:0.2px currentColor;">16’656</div>
<div class="t" style="top:343.47px;font-size:8.75px;line-height:8.75px;color:#262626;font-weight:400;right:568.95px;-webkit-text-stroke:0.2px currentColor;">13.01.2023</div>
<div class="t" style="top:343.47px;font-size:8.75px;line-height:8.75px;color:#262626;font-weight:400;left:-49.35000000000001px;width:300px;text-align:center;-webkit-text-stroke:0.2px currentColor;">#WERT!</div>
<div class="t" style="top:343.47px;font-size:8.75px;line-height:8.75px;color:#262626;font-weight:400;right:404.4px;-webkit-text-stroke:0.2px currentColor;">5’769</div>
<div class="t" style="top:357.19px;font-size:8.75px;line-height:8.75px;color:#262626;font-weight:400;right:568.95px;-webkit-text-stroke:0.2px currentColor;">14.01.2023</div>
<div class="t" style="top:357.19px;font-size:8.75px;line-height:8.75px;color:#262626;font-weight:400;left:-49.35000000000001px;width:300px;text-align:center;-webkit-text-stroke:0.2px currentColor;">#WERT!</div>
<div class="t" style="top:357.19px;font-size:8.75px;line-height:8.75px;color:#262626;font-weight:400;right:404.4px;-webkit-text-stroke:0.2px currentColor;">11’956</div>
<div class="t" style="top:370.91px;font-size:8.75px;line-height:8.75px;color:#262626;font-weight:400;right:568.95px;-webkit-text-stroke:0.2px currentColor;">15.01.2023</div>
<div class="t" style="top:370.91px;font-size:8.75px;line-height:8.75px;color:#262626;font-weight:400;left:-49.35000000000001px;width:300px;text-align:center;-webkit-text-stroke:0.2px currentColor;">#WERT!</div>
<div class="t" style="top:370.91px;font-size:8.75px;line-height:8.75px;color:#262626;font-weight:400;right:404.4px;-webkit-text-stroke:0.2px currentColor;">5’011</div>
<div class="t" style="top:384.63px;font-size:8.75px;line-height:8.75px;color:#262626;font-weight:400;right:568.95px;-webkit-text-stroke:0.2px currentColor;">16.01.2023</div>
<div class="t" style="top:384.63px;font-size:8.75px;line-height:8.75px;color:#262626;font-weight:400;left:-49.35000000000001px;width:300px;text-align:center;-webkit-text-stroke:0.2px currentColor;">#WERT!</div>
<div class="t" style="top:384.63px;font-size:8.75px;line-height:8.75px;color:#262626;font-weight:400;right:404.4px;-webkit-text-stroke:0.2px currentColor;">1’504</div>
<div class="t" style="top:398.35px;font-size:8.75px;line-height:8.75px;color:#262626;font-weight:400;right:568.95px;-webkit-text-stroke:0.2px currentColor;">17.01.2023</div>
<div class="t" style="top:398.35px;font-size:8.75px;line-height:8.75px;color:#262626;font-weight:400;left:-49.35000000000001px;width:300px;text-align:center;-webkit-text-stroke:0.2px currentColor;">#WERT!</div>
<div class="t" style="top:398.35px;font-size:8.75px;line-height:8.75px;color:#262626;font-weight:400;right:459.25px;-webkit-text-stroke:0.2px currentColor;">18’600</div>
<div class="t" style="top:398.35px;font-size:8.75px;line-height:8.75px;color:#262626;font-weight:400;right:404.4px;-webkit-text-stroke:0.2px currentColor;">14’138</div>
<div class="t" style="top:412.07px;font-size:8.75px;line-height:8.75px;color:#262626;font-weight:400;right:568.95px;-webkit-text-stroke:0.2px currentColor;">18.01.2023</div>
<div class="t" style="top:412.07px;font-size:8.75px;line-height:8.75px;color:#262626;font-weight:400;left:-49.35000000000001px;width:300px;text-align:center;-webkit-text-stroke:0.2px currentColor;">#WERT!</div>
<div class="t" style="top:412.07px;font-size:8.75px;line-height:8.75px;color:#262626;font-weight:400;right:404.4px;-webkit-text-stroke:0.2px currentColor;">6’656</div>
<svg class="s" style="left:73.5px;top:326.2px;" width="5" height="5" viewBox="0 0 5 5"><path d="M0 0 H3.6 L0 3.6 Z" fill="#1e8a4c"/></svg>
<svg class="s" style="left:73.5px;top:340.2px;" width="5" height="5" viewBox="0 0 5 5"><path d="M0 0 H3.6 L0 3.6 Z" fill="#1e8a4c"/></svg>
<svg class="s" style="left:73.5px;top:354.2px;" width="5" height="5" viewBox="0 0 5 5"><path d="M0 0 H3.6 L0 3.6 Z" fill="#1e8a4c"/></svg>
<svg class="s" style="left:73.5px;top:367.2px;" width="5" height="5" viewBox="0 0 5 5"><path d="M0 0 H3.6 L0 3.6 Z" fill="#1e8a4c"/></svg>
<svg class="s" style="left:73.5px;top:381.2px;" width="5" height="5" viewBox="0 0 5 5"><path d="M0 0 H3.6 L0 3.6 Z" fill="#1e8a4c"/></svg>
<svg class="s" style="left:73.5px;top:395.2px;" width="5" height="5" viewBox="0 0 5 5"><path d="M0 0 H3.6 L0 3.6 Z" fill="#1e8a4c"/></svg>
<svg class="s" style="left:73.5px;top:408.2px;" width="5" height="5" viewBox="0 0 5 5"><path d="M0 0 H3.6 L0 3.6 Z" fill="#1e8a4c"/></svg>
<div class="r" style="left:50px;top:325.6px;width:12.6px;height:13.2px;background:#fff;border:0.7px solid #c8c8c8;box-sizing:border-box;"></div>
<svg class="s" style="left:51.5px;top:327.6px;" width="11" height="10" viewBox="0 0 11 10"><path d="M5.5 0.8 L10.3 9.3 H0.7 Z" fill="#f3b63a" stroke="#d08f1c" stroke-width="0.6"/><path d="M5.5 3.5 V6.5 M5.5 7.5 V8.4" stroke="#333" stroke-width="1"/></svg>
<div class="r" style="left:72.2px;top:325px;width:56.5px;height:15px;border:1.4px solid #1f7a48;box-sizing:border-box;"></div>
<div class="r" style="left:126.2px;top:337px;width:3.2px;height:3.2px;background:#1f7a48;border:0.7px solid #fff;"></div>
</div>
<div class="r" style="left:623px;top:147px;width:13px;height:273px;background:#f3f3f3;"></div>
<svg class="s" style="left:629px;top:152px;" width="6.5" height="4" viewBox="0 0 6.5 4"><path d="M0.3 3.8 L3.25 0.3 L6.2 3.8 Z" fill="#666"/></svg>
<div class="r" style="left:629.5px;top:160px;width:5.5px;height:48px;background:#767676;border-radius:2.75px;"></div>
<svg class="s" style="left:628px;top:414px;" width="7" height="5" viewBox="0 0 7 5"><path d="M0.5 0.5 L3.5 4.5 L6.5 0.5 Z" fill="#666"/></svg>
<div class="r" style="left:0px;top:420px;width:640px;height:21px;background:#f3f3f3;"></div>
<div class="r" style="left:0px;top:420px;width:640px;height:0.6px;background:#d8d8d8;"></div>
<svg class="s" style="left:19px;top:427px;" width="6" height="8" viewBox="0 0 6 8"><path d="M4.5 1 L1.5 4 L4.5 7" fill="none" stroke="#b0b0b0" stroke-width="0.9"/></svg>
<svg class="s" style="left:41px;top:427px;" width="6" height="8" viewBox="0 0 6 8"><path d="M1.5 1 L4.5 4 L1.5 7" fill="none" stroke="#b0b0b0" stroke-width="0.9"/></svg>
<div class="t" style="top:426.85px;font-size:8.8px;line-height:8.8px;color:#444;font-weight:400;left:85.11px;transform:scaleX(1.077);transform-origin:0 0;">Tabelle1</div>
<div class="r" style="left:130px;top:424px;width:0.8px;height:13px;background:#d0d0d0;"></div>
<div class="t" style="top:426.85px;font-size:8.8px;line-height:8.8px;color:#444;font-weight:400;left:137.81px;transform:scaleX(1.088);transform-origin:0 0;">Tabelle2</div>
<div class="r" style="left:183.5px;top:420px;width:49px;height:19px;background:#fff;box-shadow:0 1px 1.5px rgba(0,0,0,0.15);border-radius:0 0 3px 3px;"></div>
<div class="t" style="top:424.55px;font-size:8.8px;line-height:8.8px;color:#1f1f1f;font-weight:700;left:190.91px;transform:scaleX(1.069);transform-origin:0 0;">Tabelle3</div>
<div class="r" style="left:191px;top:435px;width:36.5px;height:1.6px;background:#127a43;border-radius:1px;"></div>
<svg class="s" style="left:264px;top:426px;" width="10" height="10" viewBox="0 0 10 10"><path d="M5 1 V9 M1 5 H9" stroke="#555" stroke-width="0.9"/></svg>
<div class="r" style="left:384.8px;top:428px;width:1.2px;height:1.2px;background:#555;"></div>
<div class="r" style="left:384.8px;top:431px;width:1.2px;height:1.2px;background:#555;"></div>
<div class="r" style="left:384.8px;top:434px;width:1.2px;height:1.2px;background:#555;"></div>
<svg class="s" style="left:398px;top:427.5px;" width="7" height="7" viewBox="0 0 7 7"><path d="M6 0.5 V6.5 L1 3.5 Z" fill="#666"/></svg>
<div class="r" style="left:408px;top:427.5px;width:188px;height:6.5px;background:#767676;border-radius:3.2px;"></div>
<svg class="s" style="left:617px;top:427.5px;" width="7" height="7" viewBox="0 0 7 7"><path d="M1 0.5 V6.5 L6 3.5 Z" fill="#666"/></svg>
<div class="r" style="left:0px;top:441.5px;width:640px;height:14px;background:#f3f3f3;"></div>
<div class="r" style="left:0px;top:441.8px;width:640px;height:0.8px;background:#dedede;"></div>
<div class="t" style="top:446.07px;font-size:7.6px;line-height:7.6px;color:#3a3a3a;font-weight:400;left:5.97px;-webkit-text-stroke:0.12px currentColor;transform:scaleX(1.030);transform-origin:0 0;">Blatt 3 von 3</div>
<div class="t" style="top:446.07px;font-size:7.6px;line-height:7.6px;color:#333;font-weight:400;left:59.5px;-webkit-text-stroke:0.12px currentColor;transform:scaleX(1.057);transform-origin:0 0;">Arbeitsmappenstatistiken</div>
<svg class="s" style="left:163px;top:445px;" width="10" height="9" viewBox="0 0 10 9"><rect x="0.5" y="0.5" width="9" height="8" fill="none" stroke="#555" stroke-width="0.8"/><rect x="0.5" y="0.5" width="9" height="2" fill="#555"/><circle cx="5.5" cy="5.5" r="2" fill="none" stroke="#555" stroke-width="0.8"/></svg>
<svg class="s" style="left:185px;top:444.5px;" width="10" height="10" viewBox="0 0 10 10"><circle cx="5" cy="1.8" r="1.2" fill="none" stroke="#555" stroke-width="0.7"/><path d="M1 3.5 H9 M5 3.5 V6.5 L3 9.5 M5 6.5 L7 9.5" fill="none" stroke="#555" stroke-width="0.7"/></svg>
<div class="t" style="top:446.07px;font-size:7.6px;line-height:7.6px;color:#333;font-weight:400;left:196.86px;-webkit-text-stroke:0.12px currentColor;transform:scaleX(1.049);transform-origin:0 0;">Barrierefreiheit: Untersuchen</div>
<svg class="s" style="left:324px;top:444.5px;" width="11" height="10" viewBox="0 0 11 10"><rect x="0.5" y="0.5" width="9" height="6.5" fill="none" stroke="#555" stroke-width="0.8"/><circle cx="7" cy="7" r="2.2" fill="#f3f3f3" stroke="#555" stroke-width="0.8"/></svg>
<div class="t" style="top:446.07px;font-size:7.6px;line-height:7.6px;color:#333;font-weight:400;left:336.2px;-webkit-text-stroke:0.12px currentColor;transform:scaleX(1.064);transform-origin:0 0;">Anzeigeeinstellungen</div>
<div class="r" style="left:426px;top:442.6px;width:27.5px;height:12.4px;background:#e2e2e2;"></div>
<svg class="s" style="left:434px;top:444.5px;" width="10" height="9" viewBox="0 0 10 9"><rect x="0.5" y="0.5" width="9" height="8" fill="none" stroke="#444" stroke-width="0.8"/><path d="M0.5 3.2 H9.5 M0.5 5.8 H9.5 M3.5 0.5 V8.5 M6.5 0.5 V8.5" stroke="#444" stroke-width="0.7"/></svg>
<svg class="s" style="left:462px;top:444.5px;" width="11" height="9" viewBox="0 0 11 9"><rect x="0.5" y="0.5" width="10" height="8" fill="none" stroke="#555" stroke-width="0.8"/><rect x="3" y="2" width="5" height="5" fill="none" stroke="#555" stroke-width="0.7"/></svg>
<svg class="s" style="left:490px;top:444.5px;" width="10" height="9" viewBox="0 0 10 9"><path d="M0.5 0.5 H9.5 V8.5 H0.5 Z M4 0.5 V4.5 H6 V0.5" fill="none" stroke="#555" stroke-width="0.8"/></svg>
<div class="r" style="left:512.5px;top:448.5px;width:5px;height:0.9px;background:#555;"></div>
<div class="r" style="left:521px;top:448.8px;width:68.5px;height:0.6px;background:#888;"></div>
<div class="r" style="left:554px;top:446px;width:3.5px;height:7.5px;background:#666;border-radius:1px;"></div>
<svg class="s" style="left:592.5px;top:445.5px;" width="7" height="7" viewBox="0 0 7 7"><path d="M3.5 0.5 V6.5 M0.5 3.5 H6.5" stroke="#555" stroke-width="0.8"/></svg>
<div class="t" style="top:446.07px;font-size:7.6px;line-height:7.6px;color:#333;font-weight:400;left:607.33px;-webkit-text-stroke:0.12px currentColor;transform:scaleX(1.004);transform-origin:0 0;">100%</div>
<div class="r" style="left:0px;top:30px;width:1px;height:425px;background:#4f9a7b;"></div>
<div class="r" style="left:1px;top:30px;width:1px;height:425px;background:#dcebe5;"></div>
<div class="r" style="left:639px;top:30px;width:1px;height:425px;background:#4f9a7b;"></div>
<div class="r" style="left:638px;top:30px;width:1px;height:425px;background:#dcebe5;"></div>
</div>
</body></html>
